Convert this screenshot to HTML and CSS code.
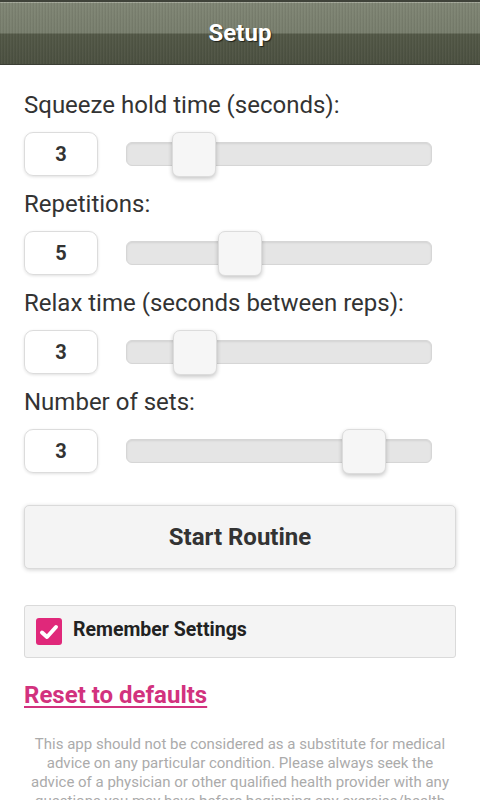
FILE: index.html
```html
<!DOCTYPE html>
<html>
<head>
<meta charset="utf-8">
<link rel="stylesheet" href="styles.css">
</head>
<body>
<header class="bar"><h1 class="title">Setup</h1></header>
<main class="content">
  <div class="field">
    <label class="label">Squeeze hold time (seconds):</label>
    <div class="row">
      <div class="num">3</div>
      <div class="track"><div class="thumb" style="left:22%"></div></div>
    </div>
  </div>
  <div class="field">
    <label class="label">Repetitions:</label>
    <div class="row">
      <div class="num">5</div>
      <div class="track"><div class="thumb" style="left:37.3%"></div></div>
    </div>
  </div>
  <div class="field">
    <label class="label">Relax time (seconds between reps):</label>
    <div class="row">
      <div class="num">3</div>
      <div class="track"><div class="thumb" style="left:22.3%"></div></div>
    </div>
  </div>
  <div class="field">
    <label class="label">Number of sets:</label>
    <div class="row">
      <div class="num">3</div>
      <div class="track"><div class="thumb" style="left:77.8%"></div></div>
    </div>
  </div>
  <button class="btn">Start Routine</button>
  <div class="check">
    <span class="box"><svg viewBox="0 0 26 26" width="26" height="26"><path d="M6 13.5 L11 18 L20 8" fill="none" stroke="#fff" stroke-width="4" stroke-linecap="round" stroke-linejoin="round"/></svg></span>
    <span class="check-label">Remember Settings</span>
  </div>
  <a class="reset" href="#">Reset to defaults</a>
  <p class="note">This app should not be considered as a substitute for medical advice on any particular condition. Please always seek the advice of a physician or other qualified health provider with any questions you may have before beginning any exercise/health program.</p>
</main>
</body>
</html>
```
FILE: styles.css
```css
html, body { margin: 0; padding: 0; background: #fff; }
body { font-family: Roboto, "Liberation Sans", sans-serif; color: #333; width: 480px; overflow: hidden; }

.bar {
  height: 65px;
  box-sizing: border-box;
  border-top: 2px solid #3f4239;
  border-bottom: 1px solid #3b3e34;
  background:
    repeating-linear-gradient(90deg, rgba(0,0,0,0.05) 0 1px, rgba(255,255,255,0.03) 1px 2px, transparent 2px 3px),
    linear-gradient(#a4a89a 0 1px, #7f8574 1px, #787e6d 31px, #535847 32px, #4c5141 62px);
  display: flex; align-items: center; justify-content: center;
}
.title {
  margin: 0;
  font-size: 24px; font-weight: 700; color: #fff;
  text-shadow: 1px 1px 1px #1e2018;
}

.content { padding: 27px 24px 0; display: flex; flex-direction: column; }

.field { display: flex; flex-direction: column; margin-bottom: 15px; }
.label { font-size: 24px; line-height: 26px; color: #333; margin-bottom: 14px; }

.row { display: flex; align-items: center; height: 44px; padding-right: 24px; }
.num {
  width: 74px; height: 44px; box-sizing: border-box;
  border: 1px solid #dcdcdc; border-radius: 9px;
  box-shadow: 0 1px 3px rgba(0,0,0,0.12);
  display: flex; align-items: center; justify-content: center;
  font-size: 20px; font-weight: 700; color: #333;
  margin-right: 28px;
}
.track {
  flex: 1; height: 24px; box-sizing: border-box; position: relative;
  background: #e5e5e5; border: 1px solid #d6d6d6; border-radius: 6px;
  box-shadow: inset 0 1px 2px rgba(0,0,0,0.08);
}
.thumb {
  position: absolute; top: -11px; width: 44px; height: 45px; margin-left: -22px;
  box-sizing: border-box;
  background: #f6f6f6; border: 1px solid #dcdcdc; border-radius: 7px;
  box-shadow: 0 2px 4px rgba(0,0,0,0.22);
}

.btn {
  margin-top: 17px;
  height: 64px; width: 432px;
  background: #f4f4f4; border: 1px solid #dadada; border-radius: 5px;
  box-shadow: 0 1px 4px rgba(0,0,0,0.18);
  font-family: Roboto, "Liberation Sans", sans-serif;
  font-size: 24px; font-weight: 700; color: #333;
}

.check {
  margin-top: 36px;
  height: 53px; box-sizing: border-box;
  background: #f4f4f4; border: 1px solid #dadada; border-radius: 3px;
  display: flex; align-items: center; padding-left: 11px;
}
.box {
  width: 26px; height: 27px; background: #e0287a; border-radius: 3px;
  display: flex; align-items: center; justify-content: center;
  margin-right: 11px;
}
.check-label { font-size: 19.5px; font-weight: 700; color: #222; margin-bottom: 4px; }

.reset {
  margin-top: 23px; align-self: flex-start;
  font-size: 24px; font-weight: 700; color: #d2327e;
  text-decoration: underline; text-underline-offset: 3px;
  line-height: 28px;
}

.note {
  margin: 26px 0 0;
  font-size: 15px; line-height: 19px; color: #ababab; text-align: center;
}
```
